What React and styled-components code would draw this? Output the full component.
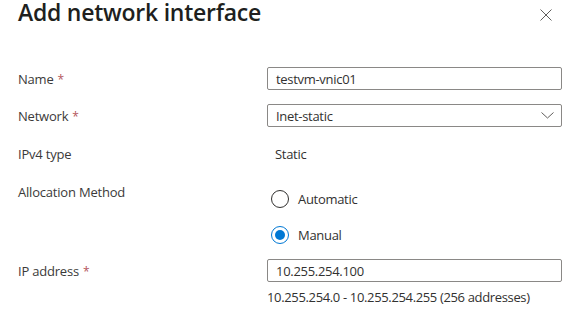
import React, { useState } from 'react'
import styled, { createGlobalStyle } from 'styled-components'

const GlobalStyle = createGlobalStyle`
    html, body {
        margin: 0;
        padding: 0;
        background: #ffffff;
    }
    body {
        font-family: "Open Sans", "Noto Sans", sans-serif;
        color: #323130;
    }
`

const Panel = styled.div`
    width: 573px;
    height: 312px;
    box-sizing: border-box;
    padding: 0 0 0 18px;
    overflow: hidden;
`

const Header = styled.div`
    display: flex;
    align-items: flex-start;
    justify-content: space-between;
    height: 52px;
    padding-right: 21px;
`

const Title = styled.h1`
    margin: 0;
    font-size: 23px;
    font-weight: 600;
    line-height: 24px;
    color: #201f1e;
    letter-spacing: -0.25px;
`

const CloseButton = styled.button`
    width: 12px;
    height: 12px;
    margin-top: 9px;
    padding: 0;
    border: 0;
    background: none;
    cursor: pointer;
    display: flex;
`

const Form = styled.div`
    display: flex;
    flex-direction: column;
`

const Row = styled.div`
    display: grid;
    grid-template-columns: 249px 295px;
    align-items: ${p => (p.$top ? 'start' : 'center')};
    margin-top: ${p => p.$gap || 0}px;
`

const Label = styled.div`
    font-size: 13px;
    line-height: 18px;
    color: #3b3a39;
    letter-spacing: -0.2px;
    padding-top: 1px;
`

const Required = styled.span`
    color: #b4565c;
    margin-left: 4px;
    font-size: 12px;
`

const Field = styled.div`
    height: 23px;
    box-sizing: border-box;
    border: 1px solid #8a8886;
    border-radius: 2px;
    display: flex;
    align-items: center;
    justify-content: space-between;
    padding: 0 7px 0 8px;
    font-size: 13px;
    letter-spacing: -0.3px;
    color: #323130;
`

const Value = styled.div`
    font-size: 13px;
    line-height: 18px;
    padding-left: 8px;
    letter-spacing: -0.3px;
`

const Radios = styled.div`
    display: flex;
    flex-direction: column;
    gap: 18px;
    padding-top: 8px;
`

const RadioOption = styled.label`
    display: flex;
    align-items: center;
    gap: 9px;
    font-size: 13px;
    letter-spacing: -0.3px;
    cursor: pointer;
    padding-left: 4px;
`

const Circle = styled.span`
    width: 18px;
    height: 18px;
    box-sizing: border-box;
    border-radius: 50%;
    border: 1px solid ${p => (p.$checked ? '#0078d4' : '#323130')};
    display: flex;
    align-items: center;
    justify-content: center;
    &::after {
        content: '';
        width: 10px;
        height: 10px;
        border-radius: 50%;
        background: #0078d4;
        display: ${p => (p.$checked ? 'block' : 'none')};
    }
`

const Hint = styled.div`
    font-size: 13px;
    line-height: 18px;
    margin-top: 6px;
    letter-spacing: -0.35px;
`

function Chevron() {
    return (
        <svg width="13" height="7" viewBox="0 0 13 7">
            <path d="M0.5 0.5 L6.5 6 L12.5 0.5" fill="none" stroke="#605e5c" strokeWidth="1" />
        </svg>
    )
}

export default function App() {
    const [method, setMethod] = useState('manual')
    return (
        <>
            <GlobalStyle />
            <Panel>
                <Header>
                    <Title>Add network interface</Title>
                    <CloseButton aria-label="Close">
                        <svg width="12" height="12" viewBox="0 0 12 12">
                            <path d="M0.5 0.5 L11.5 11.5 M11.5 0.5 L0.5 11.5" stroke="#605e5c" strokeWidth="1" />
                        </svg>
                    </CloseButton>
                </Header>
                <Form>
                    <Row $gap={15}>
                        <Label>Name<Required>*</Required></Label>
                        <Field>testvm-vnic01</Field>
                    </Row>
                    <Row $gap={14}>
                        <Label>Network<Required>*</Required></Label>
                        <Field>Inet-static<Chevron /></Field>
                    </Row>
                    <Row $gap={17}>
                        <Label>IPv4 type</Label>
                        <Value>Static</Value>
                    </Row>
                    <Row $gap={19} $top>
                        <Label>Allocation Method</Label>
                        <Radios>
                            <RadioOption onClick={() => setMethod('auto')}>
                                <Circle $checked={method === 'auto'} />Automatic
                            </RadioOption>
                            <RadioOption onClick={() => setMethod('manual')}>
                                <Circle $checked={method === 'manual'} />Manual
                            </RadioOption>
                        </Radios>
                    </Row>
                    <Row $gap={15}>
                        <Label>IP address<Required>*</Required></Label>
                        <Field>10.255.254.100</Field>
                    </Row>
                    <Row>
                        <span />
                        <Hint>10.255.254.0 - 10.255.254.255 (256 addresses)</Hint>
                    </Row>
                </Form>
            </Panel>
        </>
    )
}
